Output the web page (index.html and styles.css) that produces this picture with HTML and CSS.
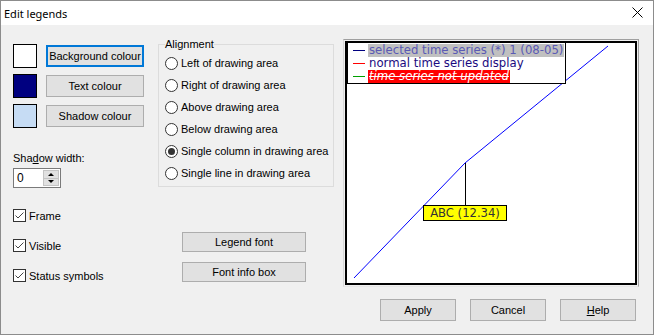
FILE: index.html
```html
<!DOCTYPE html>
<html lang="en">
<head>
  <meta charset="UTF-8" />
  <title>Edit legends</title>
  <link rel="stylesheet" href="styles.css">
</head>
<body>
  <div class="window">
    <div class="titlebar">
      <span class="title">Edit legends</span>
      <svg class="close" width="11" height="11" viewBox="0 0 11 11">
        <path d="M0.5 0.5 L10.5 10.5 M10.5 0.5 L0.5 10.5" stroke="#000" stroke-width="1" />
      </svg>
    </div>
    <div class="dialog">
      <!-- colours, shadow, checkboxes -->
      <div class="col-left">
        <div class="swatches">
          <div class="colour-row"><span class="swatch swatch-bg"></span><button class="btn btn-colour btn-focus">Background colour</button></div>
          <div class="colour-row"><span class="swatch swatch-text"></span><button class="btn btn-colour">Text colour</button></div>
          <div class="colour-row"><span class="swatch swatch-shadow"></span><button class="btn btn-colour">Shadow colour</button></div>
        </div>
        <div class="field-label">Sha<u>d</u>ow width:</div>
        <div class="spin">
          <span class="spin-value">0</span>
          <span class="spin-buttons">
            <span class="spin-btn"><span class="tri-up"></span></span>
            <span class="spin-btn"><span class="tri-down"></span></span>
          </span>
        </div>
        <div class="checks">
          <div class="check"><span class="box"><svg width="11" height="11" viewBox="0 0 11 11"><path d="M1.5 5.5 L4 8 L9.5 2.5" fill="none" stroke="#444" stroke-width="1" /></svg></span>Frame</div>
          <div class="check"><span class="box"><svg width="11" height="11" viewBox="0 0 11 11"><path d="M1.5 5.5 L4 8 L9.5 2.5" fill="none" stroke="#444" stroke-width="1" /></svg></span>Visible</div>
          <div class="check"><span class="box"><svg width="11" height="11" viewBox="0 0 11 11"><path d="M1.5 5.5 L4 8 L9.5 2.5" fill="none" stroke="#444" stroke-width="1" /></svg></span>Status symbols</div>
        </div>
      </div>

      <!-- alignment + fonts -->
      <div class="col-mid">
        <fieldset class="group">
          <legend>Alignment</legend>
          <div class="radio"><span class="dot"></span>Left of drawing area</div>
          <div class="radio"><span class="dot"></span>Right of drawing area</div>
          <div class="radio"><span class="dot"></span>Above drawing area</div>
          <div class="radio"><span class="dot"></span>Below drawing area</div>
          <div class="radio checked"><span class="dot"></span>Single column in drawing area</div>
          <div class="radio"><span class="dot"></span>Single line in drawing area</div>
        </fieldset>
        <div class="font-buttons">
          <button class="btn btn-font">Legend font</button>
          <button class="btn btn-font">Font info box</button>
        </div>
      </div>

      <!-- preview -->
      <div class="col-right">
        <div class="preview-frame">
          <div class="plot">
            <svg class="plot-lines" width="288" height="240" viewBox="0 0 288 240">
              <polyline points="7,235 118,120 261,3" fill="none" stroke="#0000ff" stroke-width="1" />
              <line x1="118.5" y1="120" x2="118.5" y2="162" stroke="#000" stroke-width="1" />
            </svg>
            <div class="legend">
              <div class="legend-row"><span class="marker marker-navy"></span><span class="legend-text selected">selected time series (*) 1 (08-05)</span></div>
              <div class="legend-row"><span class="marker marker-red"></span><span class="legend-text normal">normal time series display</span></div>
              <div class="legend-row"><span class="marker marker-green"></span><span class="legend-text stale">time series not updated</span></div>
            </div>
            <div class="infobox">ABC (12.34)</div>
          </div>
        </div>
        <div class="dialog-buttons">
          <button class="btn btn-dialog">Apply</button>
          <button class="btn btn-dialog">Cancel</button>
          <button class="btn btn-dialog"><u>H</u>elp</button>
        </div>
      </div>
    </div>
  </div>
</body>
</html>
```

FILE: styles.css
```css
:root {
  --face: #f0f0f0;
  --btn-face: #e1e1e1;
  --btn-border: #adadad;
  --focus: #0078d7;
  --group-border: #dcdcdc;
}
html, body {
  margin: 0;
  padding: 0;
  background: var(--face);
}
.window {
  width: 654px;
  height: 335px;
  box-sizing: border-box;
  border: 1px solid #8c8c8c;
  background: var(--face);
  font-family: 'Liberation Sans', Arial, sans-serif;
  font-size: 11px;
  color: #000;
  overflow: hidden;
}
.titlebar {
  height: 24px;
  background: #fff;
  display: flex;
  align-items: center;
  padding-left: 3px;
}
.title {
  font-family: 'Noto Sans', sans-serif;
  font-size: 11px;
  color: #000;
}
.close {
  margin-left: auto;
  margin-right: 10px;
  margin-top: -1px;
}
.dialog {
  display: flex;
  padding-left: 12px;
}

/* left column */
.col-left {
  width: 132px;
  padding-top: 19px;
  margin-right: 13px;
}
.swatches {
  display: flex;
  flex-direction: column;
  gap: 6px;
}
.colour-row {
  display: flex;
  align-items: center;
  gap: 9px;
  height: 24px;
}
.swatch {
  width: 24px;
  height: 24px;
  box-sizing: border-box;
  border: 1px solid #000;
}
.swatch-bg { background: #fff; }
.swatch-text { background: #000080; }
.swatch-shadow { background: #c6dcf4; }
.btn {
  font-family: 'Liberation Sans', Arial, sans-serif;
  font-size: 11px;
  color: #000;
  background: var(--btn-face);
  border: 1px solid var(--btn-border);
  box-sizing: border-box;
  padding: 0;
  margin: 0;
}
.btn-colour {
  width: 98px;
  height: 22px;
}
.btn-focus {
  border: 2px solid var(--focus);
}
.field-label {
  margin-top: 24px;
  line-height: 13px;
}
.spin {
  margin-top: 3px;
  width: 48px;
  height: 20px;
  box-sizing: border-box;
  border: 1px solid #7a7a7a;
  background: #fff;
  display: flex;
  align-items: center;
}
.spin-value {
  padding-left: 3px;
  flex: 1;
  font-size: 12px;
}
.spin-buttons {
  display: flex;
  flex-direction: column;
  width: 16px;
  height: 16px;
  margin-right: 1px;
}
.spin-btn {
  flex: 1;
  display: flex;
  align-items: center;
  justify-content: center;
  background: var(--btn-face);
  border: 1px solid #c4c4c4;
}
.spin-btn + .spin-btn { border-top: none; }
.tri-up, .tri-down {
  width: 0;
  height: 0;
  border-left: 3px solid transparent;
  border-right: 3px solid transparent;
}
.tri-up { border-bottom: 3px solid #000; }
.tri-down { border-top: 3px solid #000; }
.checks {
  margin-top: 21px;
  display: flex;
  flex-direction: column;
  gap: 17px;
}
.check {
  display: flex;
  align-items: center;
  gap: 3px;
  height: 13px;
}
.box {
  width: 13px;
  height: 13px;
  box-sizing: border-box;
  border: 1px solid #333;
  background: #fff;
  display: flex;
}

/* middle column */
.col-mid {
  width: 176px;
  margin-right: 9px;
}
.group {
  margin: 13px 0 0;
  width: 176px;
  box-sizing: border-box;
  min-width: 0;
  border: 1px solid var(--group-border);
  padding: 1px 0 2px 6px;
}
.group legend {
  padding: 0;
  line-height: 13px;
}
.radio {
  display: flex;
  align-items: center;
  gap: 3px;
  height: 22px;
}
.dot {
  width: 13px;
  height: 13px;
  box-sizing: border-box;
  border: 1px solid #333;
  border-radius: 50%;
  background: #fff;
  display: flex;
  align-items: center;
  justify-content: center;
}
.radio.checked .dot::after {
  content: '';
  width: 7px;
  height: 7px;
  border-radius: 50%;
  background: #333;
}
.font-buttons {
  margin: 45px 0 0 24px;
  display: flex;
  flex-direction: column;
  gap: 10px;
}
.btn-font {
  width: 124px;
  height: 20px;
}

/* preview */
.col-right {
  width: 296px;
}
.preview-frame {
  margin-top: 14px;
  height: 248px;
  box-sizing: border-box;
  border: 1px solid #a0a0a0;
  border-left-color: #d8d8d8;
  border-bottom-color: #e6e6e6;
  padding: 1px;
}
.plot {
  position: relative;
  height: 244px;
  box-sizing: border-box;
  border: 2px solid #000;
  background: #fff;
}
.plot-lines {
  position: absolute;
  left: 0;
  top: 0;
}
.legend {
  position: absolute;
  left: 0;
  top: -1px;
  width: 219px;
  box-sizing: border-box;
  border: 1px solid #000;
  background: #fff;
  padding: 1px 0 0;
  font-family: 'DejaVu Sans', sans-serif;
  font-size: 11.7px;
}
.legend-row {
  display: flex;
  align-items: center;
  height: 13px;
}
.marker {
  width: 12px;
  height: 1px;
  margin: 0 3px 0 5px;
}
.marker-navy { background: #000080; }
.marker-red { background: #ff0000; }
.marker-green { background: #00a000; }
.legend-text {
  line-height: 13px;
  padding: 0 1px;
  white-space: nowrap;
}
.selected {
  background: #c0c0c0;
  color: #5a5ab4;
}
.normal {
  color: #1a0a80;
}
.stale {
  background: #ff0000;
  color: #fff;
  font-style: italic;
  text-decoration: line-through;
}
.infobox {
  position: absolute;
  left: 76px;
  top: 162px;
  width: 84px;
  height: 16px;
  box-sizing: border-box;
  border: 1px solid #000;
  background: #ffff00;
  color: #333;
  font-family: 'DejaVu Sans', sans-serif;
  font-size: 11.6px;
  line-height: 14px;
  text-align: center;
}
.dialog-buttons {
  margin-top: 12px;
  padding-right: 3px;
  display: flex;
  justify-content: flex-end;
  gap: 14px;
}
.btn-dialog {
  width: 76px;
  height: 22px;
}
```
